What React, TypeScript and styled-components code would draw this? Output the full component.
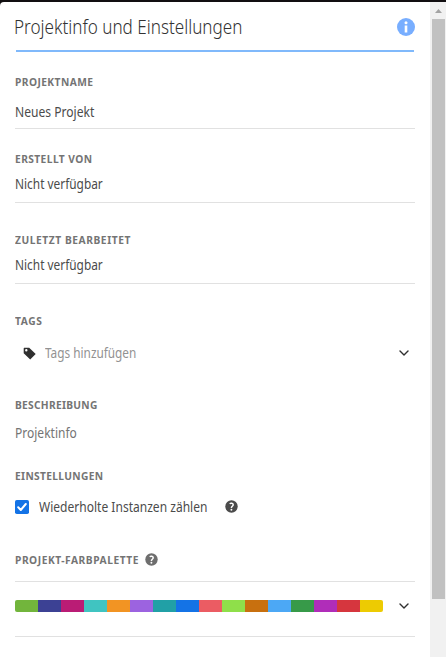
import React from "react";
import styled, { createGlobalStyle } from "styled-components";

const GlobalStyle = createGlobalStyle`
  * { box-sizing: border-box; }
  body { margin: 0; overflow: hidden; background: #111; }
`;

const Window = styled.div`
  display: flex;
  width: 446px;
  height: 657px;
  padding-top: 2px;
  background: #120f11;
  font-family: "Noto Sans", "Open Sans", sans-serif;
  font-size: 13.5px;
  color: #4b4b4b;
`;

const Panel = styled.main`
  flex: 1;
  padding: 0 15px;
  background: #fff;
  border-top-left-radius: 4px;
`;

const Header = styled.header`
  display: flex;
  align-items: center;
  justify-content: space-between;
  height: 50px;
  margin-left: 1px;
  margin-right: 1px;
  border-bottom: 2px solid #80b9fb;
`;

const Title = styled.h1`
  margin: 1px 0 0 -2px;
  font-size: 20px;
  font-weight: 300;
  line-height: 28px;
  color: #323232;
  white-space: nowrap;
  transform: scaleX(0.855);
  transform-origin: left center;
`;

const InfoIcon = styled.svg`
  width: 18px;
  height: 18px;
  margin-right: -1px;
  margin-top: 2px;
`;

const Section = styled.section<{ $height: number; $top: number; $line?: boolean }>`
  height: ${(p) => p.$height}px;
  padding-top: ${(p) => p.$top}px;
  border-bottom: ${(p) => (p.$line ? "1px solid #e1e1e1" : "none")};
`;

const LabelRow = styled.div`
  display: flex;
  align-items: center;
  height: 16px;
`;

const Label = styled.h2<{ $spacing: number }>`
  margin: 0;
  font-size: 11px;
  font-weight: 700;
  line-height: 16px;
  letter-spacing: ${(p) => p.$spacing}px;
  color: #747474;
  white-space: nowrap;
  transform: scaleX(0.93);
  transform-origin: left center;
`;

const Value = styled.div<{ $gap: number; $scale: number; $color?: string }>`
  height: 20px;
  margin-top: ${(p) => p.$gap}px;
  line-height: 20px;
  color: ${(p) => p.$color ?? "#4b4b4b"};
  white-space: nowrap;
  transform: scaleX(${(p) => p.$scale});
  transform-origin: left center;
`;

const Row = styled.div<{ $gap: number }>`
  display: flex;
  align-items: center;
  height: 20px;
  margin-top: ${(p) => p.$gap}px;
`;

const RowText = styled.span<{ $scale: number; $left: number; $color?: string }>`
  margin-left: ${(p) => p.$left}px;
  line-height: 20px;
  color: ${(p) => p.$color ?? "#4b4b4b"};
  white-space: nowrap;
  transform: scaleX(${(p) => p.$scale});
  transform-origin: left center;
`;

const TagIcon = styled.svg`
  width: 13px;
  height: 13px;
  margin-left: 8px;
`;

const Chevron = styled.svg`
  width: 10px;
  height: 6px;
  margin-left: auto;
  margin-right: 6px;
`;

const CheckBox = styled.svg`
  width: 14px;
  height: 14px;
`;

const HelpSvg = styled.svg<{ $left: number }>`
  width: 13px;
  height: 13px;
  margin-left: ${(p) => p.$left}px;
  margin-top: -2px;
`;

const PaletteRow = styled.div`
  display: flex;
  align-items: center;
  height: 56px;
  padding-bottom: 6px;
  border-top: 1px solid #e1e1e1;
  border-bottom: 1px solid #e1e1e1;
`;

const Palette = styled.div`
  display: flex;
  width: 368px;
  height: 12px;
  overflow: hidden;
  border-radius: 2px;
`;

const Swatch = styled.span<{ $color: string }>`
  flex: 1;
  background: ${(p) => p.$color};
`;

const ScrollTrack = styled.div`
  display: flex;
  flex-direction: column;
  width: 16px;
  padding: 0 1px 0 2px;
  background: #f1f1f1;
`;

const ScrollArrow = styled.svg`
  width: 13px;
  height: 17px;
  flex: none;
`;

const ScrollThumb = styled.div`
  height: 580px;
  background: #c1c1c1;
`;

const colors = [
  "#72b53c", "#3c4194", "#ba1c75", "#40c4c1", "#f29423", "#9c63e0", "#21a0a6", "#1473e6",
  "#eb5c63", "#8fdf4a", "#c8700f", "#4ca8f5", "#379a49", "#b02db9", "#d6363e", "#edcb02",
];

const ChevronDown = () => (
  <Chevron viewBox="0 0 10 6">
    <path d="M1 .9 5 4.9 9 .9" fill="none" stroke="#303030" strokeWidth="1.4" strokeLinecap="round" strokeLinejoin="round" />
  </Chevron>
);

const Help = ({ left, color }: { left: number; color: string }) => (
  <HelpSvg $left={left} viewBox="0 0 13 13">
    <circle cx="6.5" cy="6.5" r="6.2" fill={color} />
    <path d="M4.7 3.8C5.6 3 8.2 3 8.2 4.8c0 1.5-1.8 1.5-1.8 3.1" fill="none" stroke="#fff" strokeWidth="1.5" />
    <circle cx="6.4" cy="9.8" r=".95" fill="#fff" />
  </HelpSvg>
);

export default function App() {
  return (
    <Window>
      <GlobalStyle />
      <Panel>
        <Header>
          <Title>Projektinfo und Einstellungen</Title>
          <InfoIcon viewBox="0 0 18 18">
            <circle cx="9" cy="9" r="9" fill="#78aeff" />
            <circle cx="9" cy="4.7" r="1.5" fill="#fff" />
            <path d="M7.7 7.5h2.6v7H7.7z" fill="#fff" />
          </InfoIcon>
        </Header>
        <Section $height={77} $top={22} $line>
          <LabelRow><Label $spacing={0.45}>PROJEKTNAME</Label></LabelRow>
          <Value $gap={12} $scale={0.895}>Neues Projekt</Value>
        </Section>
        <Section $height={74} $top={22} $line>
          <LabelRow><Label $spacing={0.44}>ERSTELLT VON</Label></LabelRow>
          <Value $gap={7} $scale={0.88}>Nicht verfügbar</Value>
        </Section>
        <Section $height={81} $top={29} $line>
          <LabelRow><Label $spacing={0.6}>ZULETZT BEARBEITET</Label></LabelRow>
          <Value $gap={7} $scale={0.88}>Nicht verfügbar</Value>
        </Section>
        <Section $height={113} $top={29}>
          <LabelRow><Label $spacing={0.6}>TAGS</Label></LabelRow>
          <Row $gap={14}>
            <TagIcon viewBox="0 0 13 13">
              <path fillRule="evenodd" d="M1.2.7h5L12.7 7 7.2 12.5.7 6.2v-5zM3.3 2.1a1.2 1.2 0 1 0 0 2.4 1.2 1.2 0 0 0 0-2.4z" fill="#303030" />
            </TagIcon>
            <RowText $left={8.5} $scale={0.875} $color="#929292">Tags hinzufügen</RowText>
            <ChevronDown />
          </Row>
        </Section>
        <Section $height={71} $top={0}>
          <LabelRow><Label $spacing={0.3}>BESCHREIBUNG</Label></LabelRow>
          <Value $gap={10} $scale={0.89} $color="#747474">Projektinfo</Value>
        </Section>
        <Section $height={84} $top={0}>
          <LabelRow><Label $spacing={0.36}>EINSTELLUNGEN</Label></LabelRow>
          <Row $gap={13}>
            <CheckBox viewBox="0 0 14 14">
              <rect width="14" height="14" rx="1.8" fill="#1473e6" />
              <path d="m3.2 7.3 2.6 2.7 5-6" fill="none" stroke="#fff" strokeWidth="2" strokeLinecap="round" strokeLinejoin="round" />
            </CheckBox>
            <RowText $left={10} $scale={0.892}>Wiederholte Instanzen zählen</RowText>
            <Help left={-3} color="#4b4b4b" />
          </Row>
        </Section>
        <Section $height={29} $top={0}>
          <LabelRow><Label $spacing={0.57}>PROJEKT-FARBPALETTE</Label><Help left={-3} color="#6e6e6e" /></LabelRow>
        </Section>
        <PaletteRow>
          <Palette>
            {colors.map((color) => <Swatch key={color} $color={color} />)}
          </Palette>
          <ChevronDown />
        </PaletteRow>
      </Panel>
      <ScrollTrack>
        <ScrollArrow viewBox="0 0 13 17">
          <path d="M3 11 6.5 7 10 11z" fill="#a3a3a3" />
        </ScrollArrow>
        <ScrollThumb />
      </ScrollTrack>
    </Window>
  );
}
